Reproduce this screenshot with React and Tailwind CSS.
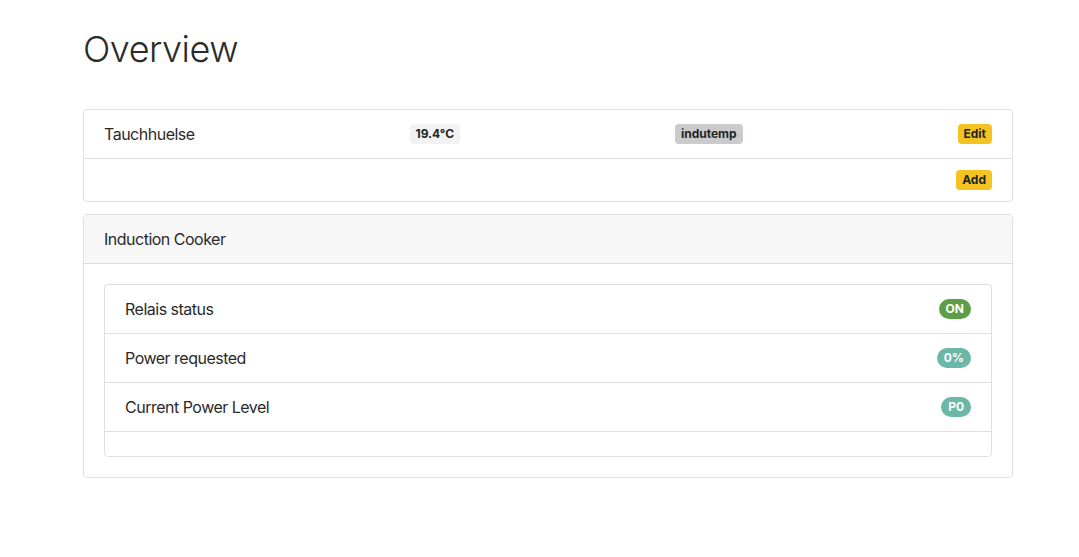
function Badge({ children, className }) {
    return (
        <span className={`inline-block text-[12px] font-bold leading-none px-[6px] py-[4px] ${className}`}>
            {children}
        </span>
    );
}

function App() {
    const sensors = [
        { name: "Tauchhuelse", value: "19.4°C", tag: "indutemp" },
    ];

    const cooker = [
        { label: "Relais status", value: "ON", color: "bg-[#5d9f46]" },
        { label: "Power requested", value: "0%", color: "bg-[#6bb7a8]" },
        { label: "Current Power Level", value: "P0", color: "bg-[#6bb7a8]" },
    ];

    return (
        <div className="min-h-screen bg-white text-[#2a2a2a]" style={{ fontFamily: "Inter, 'Noto Sans', sans-serif" }}>
            <div className="w-[930px] ml-[83px] pt-[28px]">
                <h1 className="text-[36px] font-light leading-[1.2] mb-[38px] tracking-[-0.5px] text-[#2b2b2b]">Overview</h1>

                <div className="border border-[#dfdfdf] rounded-[4px] mb-[12px]">
                    {sensors.map((s) => (
                        <div key={s.name} className="flex justify-between items-center h-[49px] px-[20px] border-b border-[#dfdfdf]">
                            <span className="text-[16px] tracking-[-0.5px]">{s.name}</span>
                            <Badge className="bg-[#f2f2f2] rounded-[4px] text-[#212529]">{s.value}</Badge>
                            <Badge className="bg-[#cbcbcb] rounded-[4px] text-[#212529]">{s.tag}</Badge>
                            <Badge className="bg-[#f4c322] rounded-[4px] text-[#212529]">Edit</Badge>
                        </div>
                    ))}
                    <div className="flex justify-end items-center h-[42px] px-[20px]">
                        <Badge className="bg-[#f4c322] rounded-[4px] text-[#212529]">Add</Badge>
                    </div>
                </div>

                <div className="border border-[#dfdfdf] rounded-[4px]">
                    <div className="h-[49px] flex items-center px-[20px] bg-[#f7f7f7] border-b border-[#dfdfdf] text-[16px] tracking-[-0.5px]">
                        Induction Cooker
                    </div>
                    <div className="p-[20px]">
                        <div className="border border-[#dfdfdf] rounded-[4px]">
                            {cooker.map((c) => (
                                <div key={c.label} className="flex justify-between items-center h-[49px] px-[20px] border-b border-[#dfdfdf]">
                                    <span className="text-[16px] tracking-[-0.5px]">{c.label}</span>
                                    <Badge className={`${c.color} px-[7px] rounded-full text-white`}>{c.value}</Badge>
                                </div>
                            ))}
                            <div className="h-[24px]"></div>
                        </div>
                    </div>
                </div>
            </div>
        </div>
    );
}

export default App;
